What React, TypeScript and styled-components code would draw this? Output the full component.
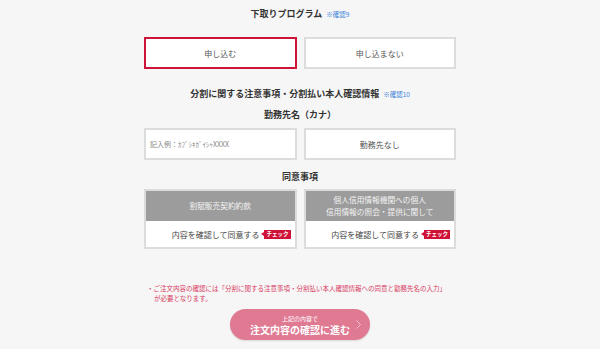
import React, { ReactElement } from 'react';
import styled, { createGlobalStyle } from 'styled-components';

const GlobalStyle = createGlobalStyle`
  body {
    margin: 0;
    background: #f6f6f6;
    font-family: "Noto Sans CJK JP", "Noto Sans", sans-serif;
    color: #333;
  }
`;

const Page = styled.div`
  width: 312px;
  margin: 0 auto;
  padding-top: 8px;
  padding-bottom: 6px;
`;

const Heading = styled.h2<{ $top?: number }>`
  margin: ${({ $top }) => $top ?? 0}px 0 0;
  font-size: 9px;
  line-height: 12px;
  font-weight: 700;
  text-align: center;
  color: #333;
`;

const Ref = styled.span`
  margin-left: 4px;
  font-size: 6.5px;
  font-weight: 400;
  color: #3b82d8;
`;

const Pair = styled.div<{ $top: number }>`
  display: grid;
  grid-template-columns: 1fr 1fr;
  gap: 7px;
  margin-top: ${({ $top }) => $top}px;
`;

const Choice = styled.div<{ $selected?: boolean }>`
  height: 32px;
  box-sizing: border-box;
  display: flex;
  align-items: center;
  justify-content: center;
  background: #fff;
  border: 2px solid ${({ $selected }) => ($selected ? '#cf1338' : '#dcdcdc')};
  font-size: 8px;
  color: #555;
`;

const Field = styled(Choice)`
  justify-content: flex-start;
  padding-left: 4px;
  font-size: 7px;
  color: #888;
`;

const Card = styled.div`
  height: 60px;
  box-sizing: border-box;
  display: flex;
  flex-direction: column;
  border: 2px solid #dcdcdc;
  background: #fff;
`;

const CardHead = styled.div`
  height: 30px;
  display: flex;
  align-items: center;
  justify-content: center;
  background: #9c9c9c;
  color: #f2f2f2;
  font-size: 7.7px;
  line-height: 12px;
  text-align: center;
`;

const CardFoot = styled.div`
  flex: 1;
  display: flex;
  align-items: center;
  justify-content: flex-end;
  gap: 5px;
  padding-right: 4px;
  font-size: 8px;
  color: #444;
`;

const Badge = styled.span`
  position: relative;
  display: inline-block;
  padding: 0 2px;
  height: 9px;
  line-height: 9px;
  background: #cf1338;
  color: #fff;
  font-size: 5.5px;
  font-weight: 700;

  &::before {
    content: '';
    position: absolute;
    left: -3px;
    top: 2.5px;
    border-style: solid;
    border-width: 2px 3px 2px 0;
    border-color: transparent #cf1338 transparent transparent;
  }
`;

const Note = styled.p`
  margin: 34px 0 0;
  padding-left: 3px;
  font-size: 6.5px;
  line-height: 10px;
  color: #d83a62;
  white-space: nowrap;

  & > span {
    display: block;
    padding-left: 7px;
  }
`;

const Proceed = styled.button`
  position: relative;
  display: flex;
  flex-direction: column;
  align-items: center;
  justify-content: center;
  width: 140px;
  height: 31px;
  margin: 6px auto 0;
  padding: 0;
  border: none;
  border-radius: 16px;
  background: #e07a93;
  box-shadow: 0 1px 2px rgba(0, 0, 0, 0.12);
  color: #fff;
  font-family: inherit;
  cursor: pointer;
`;

const ProceedSub = styled.span`
  font-size: 6px;
  line-height: 9px;
`;

const ProceedMain = styled.span`
  font-size: 10px;
  line-height: 13px;
  font-weight: 700;
`;

const Chevron = styled.svg`
  position: absolute;
  right: 9px;
  top: 11px;
`;

const App = (): ReactElement => (
  <>
    <GlobalStyle />
    <Page>
      <Heading>
        下取りプログラム
        <Ref>※確認9</Ref>
      </Heading>
      <Pair $top={17}>
        <Choice $selected>申し込む</Choice>
        <Choice>申し込まない</Choice>
      </Pair>

      <Heading $top={19}>
        分割に関する注意事項・分割払い本人確認情報
        <Ref>※確認10</Ref>
      </Heading>
      <Heading $top={9}>勤務先名（カナ）</Heading>
      <Pair $top={7}>
        <Field>記入例：ｶﾌﾞｼｷｶﾞｲｼｬXXXX</Field>
        <Choice>勤務先なし</Choice>
      </Pair>

      <Heading $top={11}>同意事項</Heading>
      <Pair $top={6}>
        <Card>
          <CardHead>割賦販売契約約款</CardHead>
          <CardFoot>
            内容を確認して同意する
            <Badge>チェック</Badge>
          </CardFoot>
        </Card>
        <Card>
          <CardHead>
            個人信用情報機関への個人
            <br />
            信用情報の照会・提供に関して
          </CardHead>
          <CardFoot>
            内容を確認して同意する
            <Badge>チェック</Badge>
          </CardFoot>
        </Card>
      </Pair>

      <Note>
        ・ご注文内容の確認には「分割に関する注意事項・分割払い本人確認情報への同意と勤務先名の入力」
        <span>が必要となります。</span>
      </Note>

      <Proceed type="button">
        <ProceedSub>上記の内容で</ProceedSub>
        <ProceedMain>注文内容の確認に進む</ProceedMain>
        <Chevron width="5" height="9" viewBox="0 0 5 9">
          <path d="M0.5 0.5 L4.5 4.5 L0.5 8.5" fill="none" stroke="#f7d3dc" strokeWidth="0.8" />
        </Chevron>
      </Proceed>
    </Page>
  </>
);

export default App;
